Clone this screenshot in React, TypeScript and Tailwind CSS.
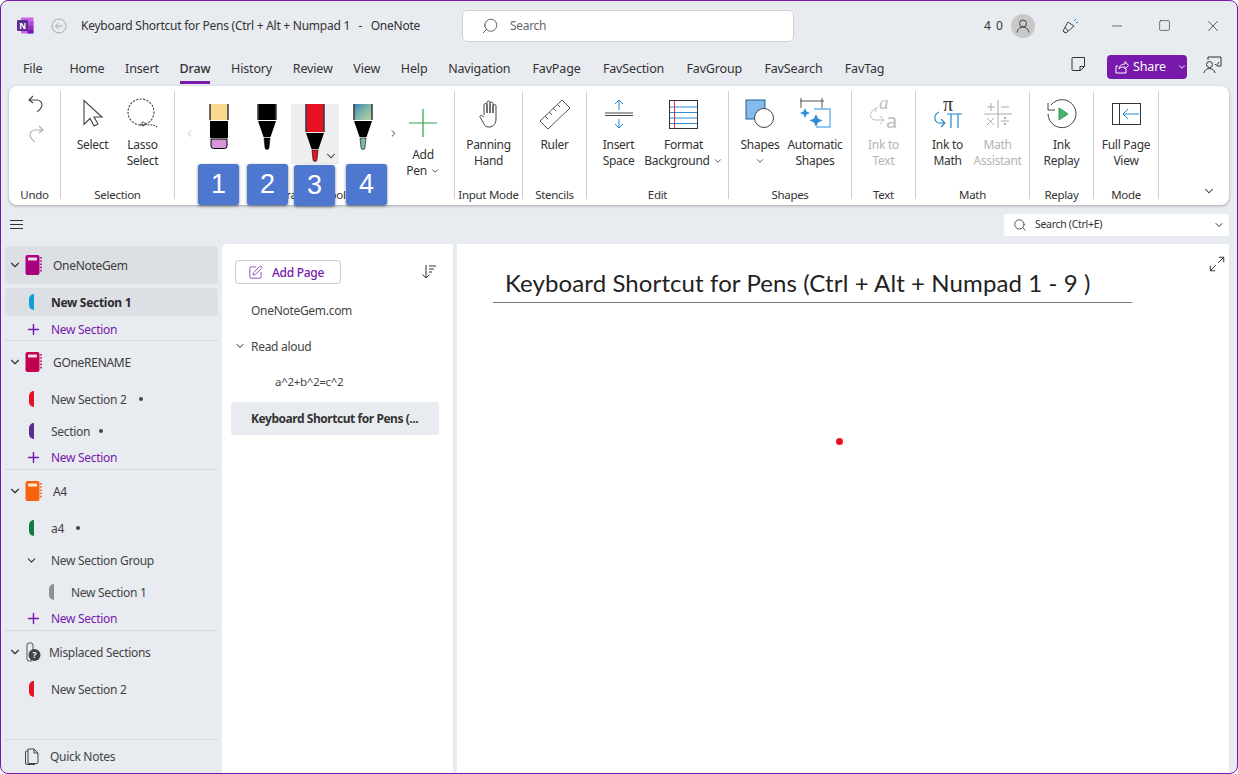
import type { ReactNode } from "react"
import { ChevronDown, ChevronLeft, ChevronRight, Maximize2, Minus, Plus, Search, Square, SquarePen, X } from "lucide-react"

const tabsLeft = ["Home", "Insert", "Draw", "History", "Review", "View", "Help", "Navigation"]
const tabsRight = ["FavPage", "FavSection", "FavGroup", "FavSearch", "FavTag"]

function NotebookIcon({ color }: { color: string }) {
  return (
    <svg width="18" height="22" viewBox="0 0 18 22" className="shrink-0">
      <rect x="0.5" y="1" width="14" height="20" rx="2" fill={color} />
      <rect x="3" y="3.5" width="9" height="3" fill="#fff" opacity="0.85" />
      <path d="M16 3v16" stroke={color} strokeWidth="1.6" strokeDasharray="1.6 1.6" />
    </svg>
  )
}

function NotebookRow({ name, color, active }: { name: string; color: string; active?: boolean }) {
  return (
    <div className={`h-[38px] flex items-center rounded-[4px] ${active ? "bg-[#dcdfe4]" : ""}`}>
      <ChevronDown size={14} strokeWidth={2} className="ml-[3px] text-[#333]" />
      <div className="ml-[3px]"><NotebookIcon color={color} /></div>
      <span className="ml-[10px] mt-[2px] text-[12px] text-[#3c3c3c]">{name}</span>
    </div>
  )
}

function SectionRow({ name, color, dot, active, indent }: { name: string; color: string; dot?: number; active?: boolean; indent?: boolean }) {
  return (
    <div className={`h-[32px] flex items-center ${indent ? "pl-[44px]" : "pl-[24px]"}`}>
      <span className="w-[5px] h-[16px] rounded-l-full shrink-0" style={{ backgroundColor: color }} />
      <span className={`ml-[17px] mt-[2px] text-[12px] ${active ? "font-bold text-[#2b2b2b]" : "text-[#444]"}`}>{name}</span>
      {dot ? <span className="w-[4px] h-[4px] rounded-full bg-[#444] shrink-0" style={{ marginLeft: dot }} /> : null}
    </div>
  )
}

function NewSection() {
  return (
    <div className="h-[20px] flex items-center pl-[20px] text-[12px] text-[#7719aa]">
      <Plus size={17} strokeWidth={2} />
      <span className="ml-[9px] mt-[2px]">New Section</span>
    </div>
  )
}

function Group({ label, w, children }: { label: string; w: number; children: ReactNode }) {
  return (
    <div className="h-[108px] shrink-0 flex flex-col border-r border-[#d0d0d0]" style={{ width: w }}>
      <div className="flex-1 flex justify-center">{children}</div>
      <div className="h-[14px] -mb-[3px] leading-[14px] text-center text-[11.5px] text-[#333] whitespace-nowrap">{label}</div>
    </div>
  )
}

function RibbonButton({ icon, lines, w, disabled, caret, caretBelow }: { icon: ReactNode; lines: string[]; w: number; disabled?: boolean; caret?: boolean; caretBelow?: boolean }) {
  return (
    <div className={`flex flex-col items-center shrink-0 ${disabled ? "text-[#b4b4b4]" : "text-[#333]"}`} style={{ width: w }}>
      <div className="h-[46px] w-full flex items-center justify-center">{icon}</div>
      {lines.map((l, i) => (
        <div key={l} className="h-[16px] leading-[16px] text-[12px] whitespace-nowrap flex items-center">
          {l}
          {caret && i === lines.length - 1 ? <ChevronDown size={10} strokeWidth={2} className="ml-[3px]" /> : null}
        </div>
      ))}
      {caretBelow ? <ChevronDown size={10} strokeWidth={2} className="mt-[3px]" /> : null}
    </div>
  )
}

function Pen({ body, tip }: { body: string; tip: string }) {
  return (
    <svg width="20" height="46" viewBox="0 0 20 46">
      <rect x="1.5" y="0" width="17" height="16" fill={body} />
      <path d="M1 0v16M19 0v16" stroke="#000" strokeWidth="1.2" />
      <path d="M1 17h18l-5.5 16h-7z" fill="#000" />
      <path d="M7 34h6l-1 9.5a2 2 0 0 1-4 0z" fill={tip} stroke="#000" strokeWidth="0.6" />
    </svg>
  )
}

function Badge({ n, left, top }: { n: string; left: number; top: number }) {
  return (
    <div
      className="absolute w-[41px] h-[41px] rounded-[3px] bg-[#4e78cf] text-white flex items-center justify-center text-[27px] tracking-normal font-['Liberation_Sans',sans-serif] shadow-[0_1px_3px_rgba(0,0,0,0.5)]"
      style={{ left, top }}
    >
      {n}
    </div>
  )
}

export default function App() {
  return (
    <div className="w-[1238px] h-[774px] overflow-hidden flex flex-col bg-[#e8ebf0] border border-[#7719aa] rounded-[8px] font-['Noto_Sans',sans-serif] tracking-[-0.3px] text-[#333]">
      {/* title bar */}
      <div className="h-[49px] shrink-0 flex items-center">
        <svg width="17" height="17" viewBox="0 0 17 17" className="ml-[16px]">
          <rect x="4" y="0.5" width="12.5" height="16" rx="1" fill="#ca64ea" />
          <rect x="10.5" y="4.5" width="6" height="4" fill="#ae4bd5" />
          <rect x="10.5" y="8.5" width="6" height="4" fill="#9332bf" />
          <rect x="10.5" y="12.5" width="6" height="4" fill="#7719aa" />
          <rect x="0" y="3" width="11" height="11" rx="1.2" fill="#5c2d91" />
          <text x="5.5" y="11.5" textAnchor="middle" fontSize="8.5" fontWeight="700" fill="#fff" fontFamily="Noto Sans">N</text>
        </svg>
        <svg width="16" height="16" viewBox="0 0 16 16" className="ml-[17px]" fill="none" stroke="#a8a8a8">
          <circle cx="8" cy="8" r="7" />
          <path d="M11.5 8h-7M7.5 5l-3 3 3 3" />
        </svg>
        <span className="ml-[14px] w-[373px] text-[12px] tracking-[-0.26px] whitespace-pre text-[#333]">Keyboard Shortcut for Pens (Ctrl + Alt + Numpad 1   -   OneNote</span>
        <div className="ml-[8px] w-[332px] h-[32px] bg-white rounded-[5px] border border-[#d2d2d2] flex items-center pl-[18px]">
          <Search size={18} strokeWidth={1.1} className="-scale-x-100 text-[#444]" />
          <span className="ml-[11px] text-[12px] text-[#666]">Search</span>
        </div>
        <span className="ml-[190px] text-[12px] tracking-[1px] text-[#333]">4 0</span>
        <div className="ml-[7px] w-[24px] h-[24px] rounded-full bg-[#c8c8c8] flex items-center justify-center">
          <svg width="14" height="14" viewBox="0 0 14 14" fill="none" stroke="#444">
            <circle cx="7" cy="4.5" r="3.5" />
            <path d="M1 13.5c.5-3.5 3-5.5 6-5.500s5.500 2 6 5.500" />
          </svg>
        </div>
        <svg width="18" height="18" viewBox="0 0 18 18" className="ml-[26px]" fill="none" stroke="#444">
          <path d="M2 14l5-9 6 4-8 7z" />
          <path d="M4 16l-2-2M7 14l-3-4" />
          <path d="M13 4l2-2M15 6l2-1" stroke="#2e8fd6" />
        </svg>
        <Minus size={16} strokeWidth={1} className="ml-[30px]" />
        <Square size={13} strokeWidth={1.2} className="ml-[33px]" />
        <X size={18} strokeWidth={1} className="ml-[33px]" />
      </div>

      {/* tabs */}
      <div className="h-[36px] shrink-0 flex items-start text-[12.5px] tracking-[-0.15px] text-[#333]">
        <span className="ml-[22px] mr-[27px] mt-[10px]">File</span>
        <div className="flex gap-[20.700px] mt-[10px]">
          {tabsLeft.map((t) => (
            <div key={t} className="relative">
              <span className={t === "Draw" ? "font-medium" : ""}>{t}</span>
              {t === "Draw" ? <div className="absolute left-0 right-0 top-[21px] h-[3px] bg-[#7719aa]" /> : null}
            </div>
          ))}
        </div>
        <div className="flex gap-[22.300px] mt-[10px] ml-[22px]">
          {tabsRight.map((t) => (
            <span key={t}>{t}</span>
          ))}
        </div>
        <svg width="18" height="18" viewBox="0 0 18 18" className="ml-auto mt-[5px]" fill="none" stroke="#333">
          <path d="M4 2.500h11.500v9l-4 4H4a1 1 0 0 1-1-1V3.500a1 1 0 0 1 1-1z" />
          <path d="M15 11.500h-4v4" />
        </svg>
        <div className="ml-[20px] mt-[5px] w-[80px] h-[24px] bg-[#7719aa] rounded-[4px] text-white flex items-center pl-[8px] text-[12.500px]">
          <svg width="14" height="14" viewBox="0 0 14 14" fill="none" stroke="#fff">
            <path d="M3 6H1v7h10V9" />
            <path d="M4 9c0-3 3-5 6-5V1.500l3.500 4L10 9V7C8 7 5 7 4 9z" />
          </svg>
          <span className="ml-[4px]">Share</span>
          <ChevronDown size={10} strokeWidth={2.2} className="ml-[11px]" />
        </div>
        <svg width="20" height="20" viewBox="0 0 20 20" className="ml-[15px] mr-[15px] mt-[5px]" fill="none" stroke="#333">
          <circle cx="7.500" cy="9.500" r="3" />
          <path d="M2 18c.5-3 3-4.500 5.500-4.500S12.500 15 13 18M6 5V2h13v9h-4" />
          <path d="M13 9l1.500 1.500L17 7" />
        </svg>
      </div>

      {/* ribbon */}
      <div className="relative mx-[8px] h-[119px] shrink-0 bg-white rounded-[8px] shadow-[0_1px_3px_rgba(0,0,0,0.3)] flex pt-[5px]">
        <Group label="Undo" w={52}>
          <div className="flex flex-col items-center pt-[4px] pl-[2px] gap-[12px]">
            <svg width="18" height="18" viewBox="0 0 18 18" fill="none" stroke="#444" strokeWidth="1.1">
              <path d="M6 1L2 5l4 3M2 5h8a5 5 0 0 1 5 5c0 3-2 4.500-5 7" />
            </svg>
            <svg width="18" height="18" viewBox="0 0 18 18" fill="none" stroke="#b0b0b0" strokeWidth="1.1">
              <path d="M12 1l4 4-4 3M16 5H8a5 5 0 0 0-5 5c0 3 2 4.500 5 7" />
            </svg>
          </div>
        </Group>
        <Group label="Selection" w={114}>
          <RibbonButton
            w={50}
            lines={["Select"]}
            icon={
              <svg width="24" height="30" viewBox="0 0 24 30" fill="none" stroke="#444" strokeWidth="1.1">
                <path d="M3 1.500v24l6-6 4 7.500 4-2-4-7h8z" />
              </svg>
            }
          />
          <RibbonButton
            w={50}
            lines={["Lasso", "Select"]}
            icon={
              <svg width="34" height="34" viewBox="0 0 34 34" fill="none" stroke="#444" strokeWidth="1.1">
                <circle cx="15" cy="15" r="13" strokeDasharray="2.200 1.300" />
                <path d="M14 27c2 3 5 2 5-.5s-5-1.500-3 .500c4 2 10-1 15 3" strokeDasharray="2 1" />
              </svg>
            }
          />
        </Group>
        <Group label="Drawing Tools" w={280}>
          <div className="flex pl-[9px] w-full">
            <div className="w-[11px] pt-[37px]"><ChevronLeft size={11} className="text-[#bbb]" /></div>
            <div className="w-[48px] h-[60px] mt-[13px] flex justify-center">
              <svg width="20" height="46" viewBox="0 0 20 46">
                <rect x="1.500" y="0" width="17" height="16" fill="#f8d88f" />
                <path d="M1 0v16M19 0v16" stroke="#000" strokeWidth="1.200" />
                <rect x="1" y="17" width="18" height="17" fill="#000" />
                <path d="M2 35h16v7a2.500 2.500 0 0 1-2.500 2.500h-11A2.500 2.500 0 0 1 2 42z" fill="#d595d8" stroke="#000" />
              </svg>
            </div>
            <div className="w-[48px] h-[60px] mt-[13px] flex justify-center"><Pen body="#000" tip="#000" /></div>
            <div className="relative w-[48px] h-[60px] mt-[13px] flex justify-center bg-[#eceef0]">
              <svg width="20" height="58" viewBox="0 0 20 58">
                <rect x="1.500" y="0" width="17" height="28" fill="#e81123" />
                <path d="M1 0v28M19 0v28" stroke="#000" strokeWidth="1.200" />
                <path d="M1 29h18l-5.500 16h-7z" fill="#000" />
                <path d="M7 46h6l-1 9.500a2 2 0 0 1-4 0z" fill="#e81123" stroke="#000" strokeWidth="0.600" />
              </svg>
              <ChevronDown size={14} strokeWidth={1.800} className="absolute right-[1px] bottom-[1px]" />
            </div>
            <div className="w-[48px] h-[60px] mt-[13px] flex justify-center">
              <svg width="20" height="46" viewBox="0 0 20 46">
                <defs>
                  <linearGradient id="ocean" x1="0" y1="0" x2="1" y2="1">
                    <stop offset="0" stopColor="#3f83b5" />
                    <stop offset="0.5" stopColor="#7fb6a8" />
                    <stop offset="1" stopColor="#b9d6a6" />
                  </linearGradient>
                </defs>
                <rect x="1.500" y="0" width="17" height="16" fill="url(#ocean)" />
                <path d="M1 0v16M19 0v16" stroke="#000" strokeWidth="1.200" />
                <path d="M1 17h18l-5.500 16h-7z" fill="#000" />
                <path d="M7 34h6l-1 9.500a2 2 0 0 1-4 0z" fill="#7cb7a0" stroke="#000" strokeWidth="0.600" />
              </svg>
            </div>
            <div className="w-[11px] pt-[37px] ml-[1px]"><ChevronRight size={11} className="text-[#333]" /></div>
            <div className="flex flex-col items-center w-[48px] text-[12px] text-[#333]">
              <svg width="28" height="28" viewBox="0 0 28 28" className="mt-[18px]" stroke="#2aa148" strokeWidth="1.200">
                <path d="M14 0v28M0 14h28" />
              </svg>
              <div className="h-[16px] leading-[16px] mt-[10px]">Add</div>
              <div className="h-[16px] leading-[16px] flex items-center">Pen<ChevronDown size={10} strokeWidth={2} className="ml-[3px]" /></div>
            </div>
          </div>
        </Group>
        <Group label="Input Mode" w={68}>
          <RibbonButton
            w={66}
            lines={["Panning", "Hand"]}
            icon={
              <svg width="20" height="28" viewBox="0 0 20 28" fill="none" stroke="#444">
                <path d="M5 15V5a1.500 1.500 0 0 1 3 0v8M8 13V2.500a1.500 1.500 0 0 1 3 0V13M11 13V3.500a1.500 1.500 0 0 1 3 0V13M14 13V6a1.500 1.500 0 0 1 3 0v13c0 4-2 8-7 8H9c-3 0-4-3-5-5l-3-5c-.7-1.500 1.500-2.500 2.500-1L5 17" />
              </svg>
            }
          />
        </Group>
        <Group label="Stencils" w={64}>
          <RibbonButton
            w={60}
            lines={["Ruler"]}
            icon={
              <svg width="34" height="34" viewBox="0 0 34 34" fill="none" stroke="#555" strokeWidth="1">
                <path d="M2 24L24 3l8 8-22 21z" />
                <path d="M7 19l3 3M11 15l3 3M15 11l3 3M19 7l3 3M24 3l3 3" />
              </svg>
            }
          />
        </Group>
        <Group label="Edit" w={142}>
          <RibbonButton
            w={52}
            lines={["Insert", "Space"]}
            icon={
              <svg width="28" height="30" viewBox="0 0 28 30" fill="none" strokeWidth="1">
                <path d="M0 14h28M0 16.500h28" stroke="#444" />
                <path d="M14 11V1M10 5l4-4 4 4M14 20v9M10 25l4 4 4-4" stroke="#1e88d0" />
              </svg>
            }
          />
          <RibbonButton
            w={78}
            caret
            lines={["Format", "Background"]}
            icon={
              <svg width="29" height="29" viewBox="0 0 29 29" fill="none">
                <path d="M1 7h27M1 12.500h27M1 18h27M1 23.500h27" stroke="#2e8fd6" />
                <path d="M5.500 1v27" stroke="#e8333a" />
                <rect x="0.500" y="0.500" width="28" height="28" stroke="#333" />
              </svg>
            }
          />
        </Group>
        <Group label="Shapes" w={123}>
          <RibbonButton
            w={50}
            caretBelow
            lines={["Shapes"]}
            icon={
              <svg width="30" height="30" viewBox="0 0 30 30" fill="none">
                <rect x="1" y="1" width="19" height="19" fill="#84bbea" stroke="#1f5f95" />
                <circle cx="19" cy="19" r="9.500" fill="#fff" stroke="#444" />
              </svg>
            }
          />
          <RibbonButton
            w={60}
            lines={["Automatic", "Shapes"]}
            icon={
              <svg width="34" height="34" viewBox="0 0 34 34" fill="none">
                <path d="M2 4h24M3 1v10M24 1v10" stroke="#555" />
                <path d="M16 12h16v18H18" stroke="#6cb2e8" strokeWidth="1.400" />
                <path d="M7 11l1.500 3.500L12 16l-3.500 1.500L7 21l-1.500-3.500L2 16l3.500-1.500zM18 17l2 4.500 4.500 2-4.500 2-2 4.500-2-4.500-4.500-2 4.500-2z" fill="#2e8fd6" />
              </svg>
            }
          />
        </Group>
        <Group label="Text" w={64}>
          <RibbonButton
            w={60}
            disabled
            lines={["Ink to", "Text"]}
            icon={
              <svg width="32" height="32" viewBox="0 0 32 32" fill="none" stroke="#bdbdbd" className="overflow-visible">
                <text x="11" y="11" fontSize="19" fontStyle="italic" fontFamily="Liberation Serif" fill="#bdbdbd" stroke="none">a</text>
                <text x="18" y="30" fontSize="20" fontFamily="Noto Sans" fill="#bdbdbd" stroke="none">a</text>
                <path d="M7 11c-6 3-6 10 0 11h9M12 18l4 4-4 4M7 11l3-2M7 11l1 3" />
              </svg>
            }
          />
        </Group>
        <Group label="Math" w={114}>
          <RibbonButton
            w={50}
            lines={["Ink to", "Math"]}
            icon={
              <svg width="30" height="32" viewBox="0 0 30 32" fill="none" className="overflow-visible">
                <text x="15" y="13" textAnchor="middle" fontSize="20" fontFamily="Liberation Serif" fill="#333">π</text>
                <path d="M6 14c-6 3-5 10 0 11h5M8 21l4 4-4 4" stroke="#1e88d0" strokeWidth="1.100" />
                <path d="M14 16h15M18 16v14M25 16v14" stroke="#1e88d0" strokeWidth="1.200" />
              </svg>
            }
          />
          <RibbonButton
            w={50}
            disabled
            lines={["Math", "Assistant"]}
            icon={
              <svg width="28" height="28" viewBox="0 0 28 28" fill="none" stroke="#aaa">
                <path d="M0 14h28M14 0v28M3 7h8M7 3v8M17 7h8M3 18l7 7M10 18l-7 7M17 21h8" />
                <circle cx="21" cy="18" r="0.800" fill="#aaa" />
                <circle cx="21" cy="24" r="0.800" fill="#aaa" />
              </svg>
            }
          />
        </Group>
        <Group label="Replay" w={64}>
          <RibbonButton
            w={60}
            lines={["Ink", "Replay"]}
            icon={
              <svg width="30" height="30" viewBox="0 0 30 30" fill="none" stroke="#444">
                <path d="M4 6a14 14 0 1 1-3 9" />
                <path d="M1 4v7h7" />
                <path d="M12 9l9 6-9 6z" fill="#4eb26a" stroke="#2f9a4f" />
              </svg>
            }
          />
        </Group>
        <Group label="Mode" w={65}>
          <RibbonButton
            w={62}
            lines={["Full Page", "View"]}
            icon={
              <svg width="29" height="23" viewBox="0 0 29 23" fill="none">
                <rect x="0.500" y="0.500" width="28" height="21" stroke="#333" />
                <path d="M7.500 0v22" stroke="#333" />
                <path d="M27 11H11M16 6l-5 5 5 5" stroke="#1e88d0" />
              </svg>
            }
          />
        </Group>
        <ChevronDown size={14} strokeWidth={1.800} className="absolute right-[13px] bottom-[7px]" />
        <Badge n="1" left={189} top={78} />
        <Badge n="2" left={238} top={78} />
        <Badge n="3" left={285} top={79} />
        <Badge n="4" left={337} top={78} />
      </div>

      {/* sub bar */}
      <div className="h-[39px] shrink-0 flex items-center pl-[9px] pr-[8px]">
        <svg width="13" height="10" viewBox="0 0 13 10" stroke="#333">
          <path d="M0 .5h13M0 4.500h13M0 8.500h13" />
        </svg>
        <div className="ml-auto w-[225px] h-[22px] bg-white rounded-[3px] flex items-center pl-[9px] pr-[4px] text-[10.500px] text-[#333]">
          <Search size={14} strokeWidth={1.400} />
          <span className="ml-[8px]">Search (Ctrl+E)</span>
          <ChevronDown size={12} strokeWidth={2} className="ml-auto" />
        </div>
      </div>

      {/* body */}
      <div className="flex-1 flex min-h-0">
        {/* notebooks */}
        <div className="w-[221px] shrink-0 flex flex-col pl-[4px] pr-[4px] pt-[2px]">
          <div className="border-b border-[#d6d9de] pb-[1px]">
            <NotebookRow name="OneNoteGem" color="#a6007c" active />
            <div className="mt-[4px] h-[28px] rounded-[4px] bg-[#dcdfe4] flex items-center">
              <div className="w-full"><SectionRow name="New Section 1" color="#119fd8" active /></div>
            </div>
            <div className="mt-[3px]"><NewSection /></div>
          </div>
          <div className="border-b border-[#d6d9de] pt-[2px] pb-[2px]">
            <NotebookRow name="GOneRENAME" color="#c00050" />
            <div className="mt-[2px]">
              <SectionRow name="New Section 2" color="#e81123" dot={12} />
              <SectionRow name="Section" color="#5c2d91" dot={9} />
            </div>
            <NewSection />
          </div>
          <div className="border-b border-[#d6d9de] pt-[2px] pb-[2px]">
            <NotebookRow name="A4" color="#f7630c" />
            <div className="mt-[2px]">
              <SectionRow name="a4" color="#107c41" dot={12} />
              <div className="h-[32px] flex items-center pl-[20px]">
                <ChevronDown size={13} strokeWidth={2} />
                <span className="ml-[13px] mt-[2px] text-[12px] text-[#444]">New Section Group</span>
              </div>
              <SectionRow name="New Section 1" color="#8a9299" indent />
            </div>
            <NewSection />
          </div>
          <div className="pt-[2px] flex-1">
            <div className="h-[38px] flex items-center">
              <ChevronDown size={14} strokeWidth={2} className="ml-[3px]" />
              <svg width="16" height="20" viewBox="0 0 16 20" className="ml-[3px]" fill="none">
                <path d="M2 3a2 2 0 0 1 2-2h2a2 2 0 0 1 2 2v5M2 3v14a2 2 0 0 0 2 2h3" stroke="#555" />
                <circle cx="9.500" cy="13" r="6" fill="#444" />
                <text x="9.500" y="16" textAnchor="middle" fontSize="8.500" fontWeight="700" fill="#fff">?</text>
              </svg>
              <span className="ml-[8px] mt-[2px] text-[12px] text-[#444]">Misplaced Sections</span>
            </div>
            <div className="mt-[2px]"><SectionRow name="New Section 2" color="#e81123" /></div>
          </div>
          <div className="h-[34px] shrink-0 border-t border-[#d6d9de] flex items-center pl-[19px]">
            <svg width="15" height="17" viewBox="0 0 15 17" fill="none" stroke="#444">
              <path d="M4 1h6l4 4v9.500a1 1 0 0 1-1 1H4z" />
              <path d="M10 1v4h4M4 3H2.500a1 1 0 0 0-1 1v11a1.500 1.500 0 0 0 1.500 1.500h8" />
            </svg>
            <span className="ml-[11px] text-[12px] text-[#444]">Quick Notes</span>
          </div>
        </div>

        {/* pages */}
        <div className="w-[231px] shrink-0 bg-white rounded-tl-[5px] pl-[9px] pr-[14px] pt-[16px]">
          <div className="flex items-center justify-between pl-[4px] pr-[2px] mb-[8px]">
            <div className="w-[106px] h-[24px] rounded-[4px] border border-[#c9c9c9] flex items-center pl-[12px] text-[12px] font-medium text-[#7719aa]">
              <SquarePen size={15} strokeWidth={1.200} />
              <span className="ml-[9px] mt-[2px]">Add Page</span>
            </div>
            <svg width="16" height="16" viewBox="0 0 16 16" fill="none" stroke="#333">
              <path d="M5 1v13M1.500 10.500L5 14l3.500-3.500M8 2h7M8 5h5M8 8h3" />
            </svg>
          </div>
          <div className="h-[36px] flex items-center pl-[20px] pt-[1px] text-[12px] text-[#444]">OneNoteGem.com</div>
          <div className="h-[36px] flex items-center pl-[3px] text-[12px] text-[#444]">
            <ChevronDown size={12} strokeWidth={2} className="text-[#222]" />
            <span className="ml-[5px] mt-[2px]">Read aloud</span>
          </div>
          <div className="h-[36px] flex items-center pl-[44px] text-[11.500px] text-[#444]">a^2+b^2=c^2</div>
          <div className="mt-[2px] h-[33px] rounded-[3px] bg-[#e8ebf0] flex items-center pl-[20px] text-[12px] font-bold tracking-[-0.45px] text-[#333] whitespace-nowrap">Keyboard Shortcut for Pens (...</div>
        </div>

        {/* canvas */}
        <div className="relative flex-1 ml-[4px] mr-[8px] bg-white pl-[36px] pt-[22px]">
          <div className="w-[639px] h-[37px] border-b border-[#777] pl-[12px] font-['Lato',sans-serif] text-[24px] leading-[33px] tracking-[0.1px] text-[#222] whitespace-nowrap">
            Keyboard Shortcut for Pens (Ctrl + Alt + Numpad 1 - 9 )
          </div>
          <Maximize2 size={18} strokeWidth={1.300} className="absolute right-[3px] top-[11px]" />
          <div className="absolute left-[379px] top-[194px] w-[7px] h-[7px] rounded-full bg-[#e81123]" />
        </div>
      </div>
    </div>
  )
}
